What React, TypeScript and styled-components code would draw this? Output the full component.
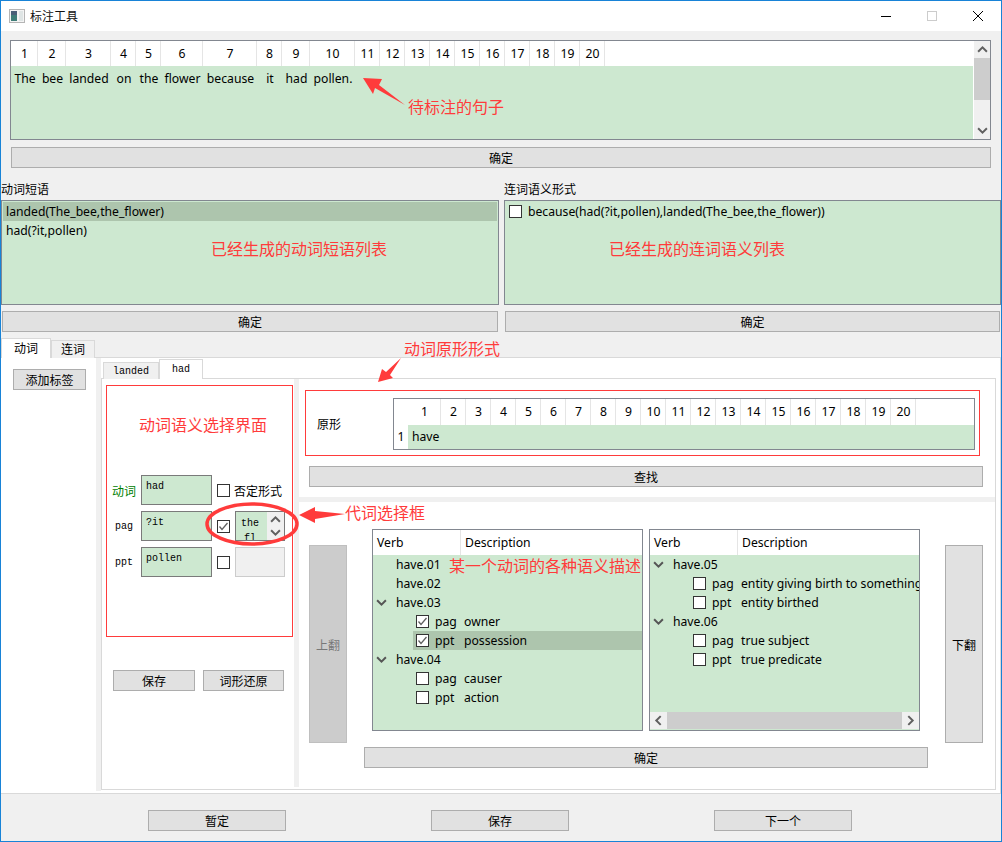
import React from "react";
import styled, { createGlobalStyle } from "styled-components";

const GREEN = "#cde8d0";
const SELECTED = "#adc5ad";
const RED = "#ff3b3b";
const UI_FONT = `"Noto Sans", "Noto Sans CJK SC", sans-serif`;
const CJK_FONT = `"Noto Sans CJK SC", sans-serif`;
const MONO_FONT = `"Liberation Mono", "Noto Sans CJK SC", monospace`;

const SENTENCE_COLS = [27, 28, 45, 25, 25, 42, 54, 25, 28, 45, 25, 25, 25, 25, 25, 25, 25, 25, 25, 25];
const SENTENCE_WORDS = ["The", "bee", "landed", "on", "the", "flower", "because", "it", "had", "pollen."];
const LEMMA_COLS = [33, ...Array(19).fill(25)] as number[];

const Chevron = ({ dir, size = 10, color = "#606060" }: { dir: "up" | "down" | "left" | "right"; size?: number; color?: string }) => {
  const pts = {
    up: "1,7 5,3 9,7",
    down: "1,3 5,7 9,3",
    left: "7,1 3,5 7,9",
    right: "3,1 7,5 3,9",
  }[dir];
  return (
    <svg width={size} height={size} viewBox="0 0 10 10">
      <polyline points={pts} fill="none" stroke={color} strokeWidth="1.8" />
    </svg>
  );
};

const Check = ({ checked }: { checked?: boolean }) => (
  <CheckBox>
    {checked && (
      <svg width="11" height="11" viewBox="0 0 11 11">
        <polyline points="1.5,5.5 4,8.5 9.5,2" fill="none" stroke="#606060" strokeWidth="1.3" />
      </svg>
    )}
  </CheckBox>
);

const NumberHeader = ({ cols, lift }: { cols: number[]; lift?: boolean }) => (
  <>
    {cols.map((w, i) => (
      <HeadCell key={i} $w={w} $lift={lift}>
        {i + 1}
      </HeadCell>
    ))}
  </>
);

const Parent = ({ name, open }: { name: string; open?: boolean }) => (
  <TreeRow>
    <ArrowSlot>{open && <Chevron dir="down" size={11} color="#555" />}</ArrowSlot>
    {name}
  </TreeRow>
);

const Child = ({ role, desc, checked, selected }: { role: string; desc: string; checked?: boolean; selected?: boolean }) => (
  <ChildRow $selected={selected}>
    <Check checked={checked} />
    <Role>{role}</Role>
    {desc}
  </ChildRow>
);

const TreeHeader = () => (
  <TreeHead>
    <VerbHead>Verb</VerbHead>
    <DescHead>Description</DescHead>
  </TreeHead>
);

export default function App() {
  return (
    <Window>
      <GlobalStyle />
      <TitleBar>
        <svg width="16" height="16" viewBox="0 0 16 16">
          <rect x="0.5" y="1.5" width="15" height="13" fill="#f4f4f4" stroke="#b5b5b5" />
          <rect x="2" y="3" width="6" height="10" fill="#3f7d78" />
          <rect x="2" y="3" width="6" height="4" fill="#4a5f78" />
          <rect x="10" y="3" width="4" height="10" fill="#dfe5e5" />
        </svg>
        <Title>标注工具</Title>
        <WinControls>
          <WinButton>
            <svg width="12" height="12" viewBox="0 0 12 12">
              <line x1="1" y1="6.5" x2="11" y2="6.5" stroke="#000" />
            </svg>
          </WinButton>
          <WinButton>
            <svg width="12" height="12" viewBox="0 0 12 12">
              <rect x="1.5" y="1.5" width="9" height="9" fill="none" stroke="#ccc" />
            </svg>
          </WinButton>
          <WinButton>
            <svg width="12" height="12" viewBox="0 0 12 12">
              <path d="M1 1 L11 11 M11 1 L1 11" stroke="#000" />
            </svg>
          </WinButton>
        </WinControls>
      </TitleBar>

      <SentenceSection>
        <SentenceTable>
          <SentenceGrid>
            <HeadRow>
              <NumberHeader cols={SENTENCE_COLS} />
            </HeadRow>
            <GreenRow>
              {SENTENCE_WORDS.map((word, i) => (
                <WordCell key={word + i} $w={SENTENCE_COLS[i]}>
                  {word}
                </WordCell>
              ))}
            </GreenRow>
          </SentenceGrid>
          <VScroll>
            <ScrollBtn>
              <Chevron dir="up" size={11} />
            </ScrollBtn>
            <VThumb />
            <ScrollGap />
            <ScrollBtn>
              <Chevron dir="down" size={11} />
            </ScrollBtn>
          </VScroll>
        </SentenceTable>
        <WideButton>确定</WideButton>
      </SentenceSection>

      <ListsSection>
        <ListColumn>
          <ListLabel>动词短语</ListLabel>
          <ListBox>
            <ListRow $selected>landed(The_bee,the_flower)</ListRow>
            <ListRow>had(?it,pollen)</ListRow>
          </ListBox>
          <ListButton>确定</ListButton>
        </ListColumn>
        <ListColumn>
          <ListLabel>连词语义形式</ListLabel>
          <ListBox>
            <CheckRow>
              <Check />
              because(had(?it,pollen),landed(The_bee,the_flower))
            </CheckRow>
          </ListBox>
          <ListButton>确定</ListButton>
        </ListColumn>
      </ListsSection>

      <OuterTabs>
        <OuterTab $active>动词</OuterTab>
        <OuterTab>连词</OuterTab>
      </OuterTabs>
      <OuterPane>
        <TagColumn>
          <TagButton>添加标签</TagButton>
        </TagColumn>
        <GreyStrip />
        <InnerWidget>
          <InnerTabs>
            <InnerTab>landed</InnerTab>
            <InnerTab $active>had</InnerTab>
          </InnerTabs>
          <InnerPane>
            <SemanticColumn>
              <SemanticBox>
                <SemanticTitle>动词语义选择界面</SemanticTitle>
                <ArgRow>
                  <VerbLabel>动词</VerbLabel>
                  <ArgInput>had</ArgInput>
                  <Check />
                  <NegLabel>否定形式</NegLabel>
                </ArgRow>
                <ArgRow>
                  <ArgLabel>pag</ArgLabel>
                  <ArgInput>?it</ArgInput>
                  <Check checked />
                  <SpinBox>
                    <SpinText>the fl</SpinText>
                    <SpinArrows>
                      <Chevron dir="up" size={11} />
                      <Chevron dir="down" size={11} />
                    </SpinArrows>
                  </SpinBox>
                </ArgRow>
                <ArgRow>
                  <ArgLabel>ppt</ArgLabel>
                  <ArgInput>pollen</ArgInput>
                  <Check />
                  <DisabledBox />
                </ArgRow>
              </SemanticBox>
              <SemanticActions>
                <SaveButton>保存</SaveButton>
                <RestoreButton>词形还原</RestoreButton>
              </SemanticActions>
            </SemanticColumn>
            <VSplitter />
            <RightColumn>
              <LemmaSection>
                <LemmaBox>
                  <LemmaLabel>原形</LemmaLabel>
                  <LemmaTable>
                    <HeadRow $h={26}>
                      <CornerCell />
                      <NumberHeader cols={LEMMA_COLS} lift />
                    </HeadRow>
                    <LemmaRow>
                      <CornerCell>1</CornerCell>
                      <LemmaValue>have</LemmaValue>
                    </LemmaRow>
                  </LemmaTable>
                </LemmaBox>
                <FindButton>查找</FindButton>
              </LemmaSection>
              <HSplitter />
              <SenseSection>
                <SenseRow>
                  <PageButton $disabled>上翻</PageButton>
                  <Tree>
                    <TreeHeader />
                    <TreeBody>
                      <Parent name="have.01" />
                      <Parent name="have.02" />
                      <Parent name="have.03" open />
                      <Child role="pag" desc="owner" checked />
                      <Child role="ppt" desc="possession" checked selected />
                      <Parent name="have.04" open />
                      <Child role="pag" desc="causer" />
                      <Child role="ppt" desc="action" />
                    </TreeBody>
                  </Tree>
                  <Tree>
                    <TreeHeader />
                    <TreeBody>
                      <Parent name="have.05" open />
                      <Child role="pag" desc="entity giving birth to something" />
                      <Child role="ppt" desc="entity birthed" />
                      <Parent name="have.06" open />
                      <Child role="pag" desc="true subject" />
                      <Child role="ppt" desc="true predicate" />
                    </TreeBody>
                    <HScroll>
                      <HScrollBtn>
                        <Chevron dir="left" size={11} />
                      </HScrollBtn>
                      <HThumb />
                      <HScrollBtn>
                        <Chevron dir="right" size={11} />
                      </HScrollBtn>
                    </HScroll>
                  </Tree>
                  <PageButton>下翻</PageButton>
                </SenseRow>
                <SenseConfirm>确定</SenseConfirm>
              </SenseSection>
            </RightColumn>
          </InnerPane>
        </InnerWidget>
      </OuterPane>

      <BottomBar>
        <BottomButton>暂定</BottomButton>
        <BottomButton>保存</BottomButton>
        <BottomButton>下一个</BottomButton>
      </BottomBar>

      <Marks width="1002" height="842" viewBox="0 0 1002 842">
        <polygon points="363,78 382,79 379,85 405,105 375,88 373,94" fill={RED} />
        <polygon points="378,382 382,369 386,372 401,358 390,375 393,378" fill={RED} />
        <polygon points="299,515 315,507 315,511 345,514 315,519 315,523" fill={RED} />
        <ellipse cx="252" cy="524" rx="45" ry="20" fill="none" stroke={RED} strokeWidth="3.5" />
      </Marks>
      <Note $x={408} $y={96}>待标注的句子</Note>
      <Note $x={211} $y={238}>已经生成的动词短语列表</Note>
      <Note $x={609} $y={238}>已经生成的连词语义列表</Note>
      <Note $x={404} $y={338}>动词原形形式</Note>
      <Note $x={345} $y={502}>代词选择框</Note>
      <Note $x={449} $y={555}>某一个动词的各种语义描述</Note>
    </Window>
  );
}

const GlobalStyle = createGlobalStyle`
  * { box-sizing: border-box; }
  body { margin: 0; background: #f0f0f0; }
`;

const Window = styled.div`
  position: relative;
  width: 1002px;
  height: 842px;
  overflow: hidden;
  border: 1px solid #1883d7;
  background: #f0f0f0;
  font-family: ${UI_FONT};
  font-size: 12.2px;
  color: #000;
  display: flex;
  flex-direction: column;
`;

const TitleBar = styled.div`
  height: 30px;
  flex: none;
  background: #fff;
  display: flex;
  align-items: center;
  padding-left: 8px;
`;
const Title = styled.span`
  margin: 0 0 2px 5px;
  font-family: ${CJK_FONT};
  font-size: 12px;
  color: #111;
`;
const WinControls = styled.div`
  margin-left: auto;
  display: flex;
`;
const WinButton = styled.div`
  width: 46px;
  height: 30px;
  display: flex;
  align-items: center;
  justify-content: center;
`;

const PlainButton = styled.div`
  height: 21px;
  flex: none;
  background: #e1e1e1;
  border: 1px solid #adadad;
  font-family: ${CJK_FONT};
  font-size: 12px;
  display: flex;
  align-items: center;
  justify-content: center;
`;

const SentenceSection = styled.div`
  flex: none;
  padding: 9px 10px 0 9px;
`;
const SentenceTable = styled.div`
  height: 100px;
  display: flex;
  background: #fff;
  border: 1px solid #828790;
`;
const SentenceGrid = styled.div`
  flex: 1;
  display: flex;
  flex-direction: column;
`;
const HeadRow = styled.div<{ $h?: number }>`
  height: ${(p) => p.$h ?? 25}px;
  flex: none;
  display: flex;
  background: #fff;
`;
const HeadCell = styled.div<{ $w: number; $lift?: boolean }>`
  width: ${(p) => p.$w}px;
  flex: none;
  padding-left: 1px;
  padding-bottom: ${(p) => (p.$lift ? 2 : 0)}px;
  border-right: 1px solid #e5e5e5;
  display: flex;
  align-items: center;
  justify-content: center;
`;
const GreenRow = styled.div`
  flex: 1;
  display: flex;
  background: ${GREEN};
`;
const WordCell = styled.div<{ $w: number }>`
  width: ${(p) => p.$w}px;
  height: 25px;
  flex: none;
  padding-left: 1px;
  white-space: nowrap;
  display: flex;
  align-items: center;
  justify-content: center;
`;
const VScroll = styled.div`
  width: 16px;
  flex: none;
  margin-left: 1px;
  background: #f0f0f0;
  display: flex;
  flex-direction: column;
`;
const ScrollBtn = styled.div`
  height: 17px;
  flex: none;
  display: flex;
  align-items: center;
  justify-content: center;
`;
const VThumb = styled.div`
  height: 42px;
  flex: none;
  background: #cdcdcd;
`;
const ScrollGap = styled.div`
  flex: 1;
`;
const WideButton = styled(PlainButton)`
  margin: 7px 0 0 1px;
`;

const ListsSection = styled.div`
  flex: none;
  display: grid;
  grid-template-columns: 498px 497px;
  column-gap: 5px;
  padding-top: 14px;
`;
const ListColumn = styled.div`
  display: flex;
  flex-direction: column;
`;
const ListLabel = styled.div`
  height: 18px;
  font-family: ${CJK_FONT};
  font-size: 12px;
  line-height: 14px;
`;
const ListBox = styled.div`
  height: 105px;
  flex: none;
  background: ${GREEN};
  border: 1px solid #828790;
  padding: 1px;
`;
const ListRow = styled.div<{ $selected?: boolean }>`
  height: 19px;
  padding-left: 3px;
  display: flex;
  align-items: center;
  background: ${(p) => (p.$selected ? SELECTED : "transparent")};
`;
const CheckRow = styled(ListRow)`
  gap: 6px;
`;
const ListButton = styled(PlainButton)`
  margin: 6px 1px 0;
`;

const CheckBox = styled.span`
  width: 13px;
  height: 13px;
  flex: none;
  background: #fff;
  border: 1px solid #333;
  display: inline-flex;
  align-items: center;
  justify-content: center;
`;

const OuterTabs = styled.div`
  height: 19px;
  flex: none;
  margin-top: 6px;
  display: flex;
  align-items: flex-start;
`;
const OuterTab = styled.div<{ $active?: boolean }>`
  width: ${(p) => (p.$active ? 50 : 44)}px;
  height: ${(p) => (p.$active ? 20 : 18)}px;
  margin-top: ${(p) => (p.$active ? 0 : 2)}px;
  padding-bottom: 2px;
  background: ${(p) => (p.$active ? "#fff" : "#f0f0f0")};
  border: 1px solid #d9d9d9;
  border-bottom: none;
  font-family: ${CJK_FONT};
  font-size: 12px;
  display: flex;
  align-items: center;
  justify-content: center;
  z-index: 1;
`;
const OuterPane = styled.div`
  height: 437px;
  flex: none;
  display: flex;
  align-items: flex-start;
  background: #fff;
  border-top: 1px solid #d9d9d9;
  border-bottom: 1px solid #d9d9d9;
  border-right: 1px solid #d9d9d9;
`;
const TagColumn = styled.div`
  width: 95px;
  flex: none;
  padding: 11px 0 0 12px;
`;
const TagButton = styled(PlainButton)`
  width: 73px;
`;
const GreyStrip = styled.div`
  width: 5px;
  height: 433px;
  flex: none;
  background: #f0f0f0;
`;
const InnerWidget = styled.div`
  width: 895px;
  flex: none;
`;
const InnerTabs = styled.div`
  height: 20px;
  padding: 1px 0 0 2px;
  display: flex;
  align-items: flex-end;
`;
const InnerTab = styled.div<{ $active?: boolean }>`
  width: ${(p) => (p.$active ? 44 : 56)}px;
  height: ${(p) => (p.$active ? 20 : 17)}px;
  margin-bottom: -1px;
  background: ${(p) => (p.$active ? "#fff" : "#f0f0f0")};
  border: 1px solid #d9d9d9;
  border-bottom: none;
  font-family: ${MONO_FONT};
  font-size: 10px;
  display: flex;
  align-items: center;
  justify-content: center;
  z-index: 1;
`;
const InnerPane = styled.div`
  height: 412px;
  display: flex;
  align-items: flex-start;
  border: 1px solid #d9d9d9;
`;
const SemanticColumn = styled.div`
  width: 192px;
  flex: none;
  padding: 6px 0 0 4px;
`;
const SemanticBox = styled.div`
  width: 187px;
  height: 252px;
  border: 1px solid ${RED};
  padding-top: 29px;
`;
const SemanticTitle = styled.div`
  height: 60px;
  padding-left: 32px;
  font-family: ${CJK_FONT};
  font-size: 16px;
  line-height: 18px;
  color: ${RED};
  white-space: nowrap;
`;
const ArgRow = styled.div`
  height: 30px;
  margin-bottom: 6px;
  display: flex;
  align-items: center;
`;
const ArgLabel = styled.div`
  width: 34px;
  flex: none;
  padding-left: 8px;
  font-family: ${MONO_FONT};
  font-size: 10px;
`;
const VerbLabel = styled.div`
  width: 34px;
  flex: none;
  padding-left: 5px;
  font-family: ${CJK_FONT};
  font-size: 12px;
  color: #008000;
`;
const ArgInput = styled.div`
  width: 71px;
  height: 30px;
  flex: none;
  margin-right: 5px;
  padding: 4px 4px;
  background: ${GREEN};
  border: 1px solid #7a7a7a;
  font-family: ${MONO_FONT};
  font-size: 10px;
  line-height: 14px;
`;
const NegLabel = styled.span`
  margin-left: 4px;
  font-family: ${CJK_FONT};
  font-size: 12px;
  white-space: nowrap;
`;
const SpinBox = styled.div`
  width: 50px;
  height: 30px;
  flex: none;
  margin-left: 5px;
  display: flex;
  overflow: hidden;
  border: 1px solid #7a7a7a;
`;
const SpinText = styled.div`
  width: 31px;
  flex: none;
  padding: 4px 6px 0 3px;
  background: ${GREEN};
  font-family: ${MONO_FONT};
  font-size: 10px;
  line-height: 15px;
  text-align: center;
`;
const SpinArrows = styled.div`
  flex: 1;
  background: #f0f0f0;
  display: flex;
  flex-direction: column;
  align-items: center;
  justify-content: space-evenly;
`;
const DisabledBox = styled.div`
  width: 50px;
  height: 30px;
  flex: none;
  margin-left: 5px;
  background: #f0f0f0;
  border: 1px solid #ccc;
`;
const SemanticActions = styled.div`
  margin: 33px 0 0 7px;
  display: flex;
  gap: 8px;
`;
const SaveButton = styled(PlainButton)`
  width: 82px;
`;
const RestoreButton = styled(PlainButton)`
  width: 81px;
`;

const VSplitter = styled.div`
  width: 5px;
  height: 408px;
  flex: none;
  background: #f0f0f0;
`;
const RightColumn = styled.div`
  flex: 1;
  min-width: 0;
`;
const LemmaSection = styled.div`
  height: 118px;
  padding-top: 11px;
`;
const LemmaBox = styled.div`
  width: 675px;
  height: 66px;
  margin-left: 6px;
  padding: 7px 0 0 11px;
  border: 1px solid ${RED};
  display: flex;
`;
const LemmaLabel = styled.div`
  width: 76px;
  flex: none;
  height: 50px;
  font-family: ${CJK_FONT};
  font-size: 12px;
  display: flex;
  align-items: center;
`;
const LemmaTable = styled.div`
  width: 582px;
  height: 52px;
  flex: none;
  border: 1px solid #828790;
  background: #fff;
`;
const CornerCell = styled.div`
  width: 14px;
  flex: none;
  padding-bottom: 2px;
  display: flex;
  align-items: center;
  justify-content: center;
`;
const LemmaRow = styled.div`
  height: 24px;
  display: flex;
`;
const LemmaValue = styled.div`
  flex: 1;
  padding: 0 0 2px 4px;
  background: ${GREEN};
  display: flex;
  align-items: center;
`;
const FindButton = styled(PlainButton)`
  width: 674px;
  margin: 10px 0 0 10px;
`;
const HSplitter = styled.div`
  height: 5px;
  background: #f0f0f0;
`;
const SenseSection = styled.div`
  padding: 27px 0 0 10px;
`;
const SenseRow = styled.div`
  height: 214px;
  display: flex;
  align-items: flex-start;
`;
const PageButton = styled(PlainButton)<{ $disabled?: boolean }>`
  width: 38px;
  height: 198px;
  margin: 16px ${(p) => (p.$disabled ? 25 : 0)}px 0 ${(p) => (p.$disabled ? 0 : 25)}px;
  background: ${(p) => (p.$disabled ? "#cccccc" : "#e1e1e1")};
  border-color: ${(p) => (p.$disabled ? "#bfbfbf" : "#adadad")};
  color: ${(p) => (p.$disabled ? "#787878" : "#000")};
`;
const Tree = styled.div`
  width: 271px;
  height: 202px;
  flex: none;
  margin-right: 6px;
  overflow: hidden;
  background: ${GREEN};
  border: 1px solid #828790;
  display: flex;
  flex-direction: column;

  & + ${PageButton} {
    margin-left: 19px;
  }
`;
const TreeHead = styled.div`
  height: 25px;
  flex: none;
  background: #fff;
  display: flex;
`;
const VerbHead = styled.div`
  width: 88px;
  flex: none;
  padding-left: 4px;
  border-right: 1px solid #e5e5e5;
  display: flex;
  align-items: center;
`;
const DescHead = styled.div`
  flex: 1;
  padding-left: 4px;
  display: flex;
  align-items: center;
`;
const TreeBody = styled.div`
  flex: 1;
  min-height: 0;
`;
const TreeRow = styled.div`
  height: 19px;
  display: flex;
  align-items: center;
  white-space: nowrap;
`;
const ArrowSlot = styled.span`
  width: 23px;
  flex: none;
  padding-left: 3px;
  display: flex;
  align-items: center;
`;
const ChildRow = styled(TreeRow)<{ $selected?: boolean }>`
  margin-left: 40px;
  padding-left: 3px;
  background: ${(p) => (p.$selected ? SELECTED : "transparent")};
`;
const Role = styled.span`
  width: 29px;
  flex: none;
  margin-left: 6px;
`;
const HScroll = styled.div`
  height: 17px;
  flex: none;
  margin-bottom: 1px;
  background: #f0f0f0;
  display: flex;
`;
const HScrollBtn = styled.div`
  width: 17px;
  flex: none;
  display: flex;
  align-items: center;
  justify-content: center;
`;
const HThumb = styled.div`
  flex: 1;
  background: #cdcdcd;
`;
const SenseConfirm = styled(PlainButton)`
  width: 564px;
  margin: 4px 0 0 55px;
`;

const BottomBar = styled.div`
  flex: 1;
  display: flex;
  gap: 145px;
  padding: 16px 0 0 147px;
`;
const BottomButton = styled(PlainButton)`
  width: 138px;
`;

const Marks = styled.svg`
  position: absolute;
  left: -1px;
  top: -1px;
  pointer-events: none;
  z-index: 2;
`;
const Note = styled.span<{ $x: number; $y: number }>`
  position: absolute;
  left: ${(p) => p.$x - 1}px;
  top: ${(p) => p.$y - 1}px;
  z-index: 3;
  font-family: ${CJK_FONT};
  font-size: 16px;
  line-height: 20px;
  color: ${RED};
  white-space: nowrap;
`;
